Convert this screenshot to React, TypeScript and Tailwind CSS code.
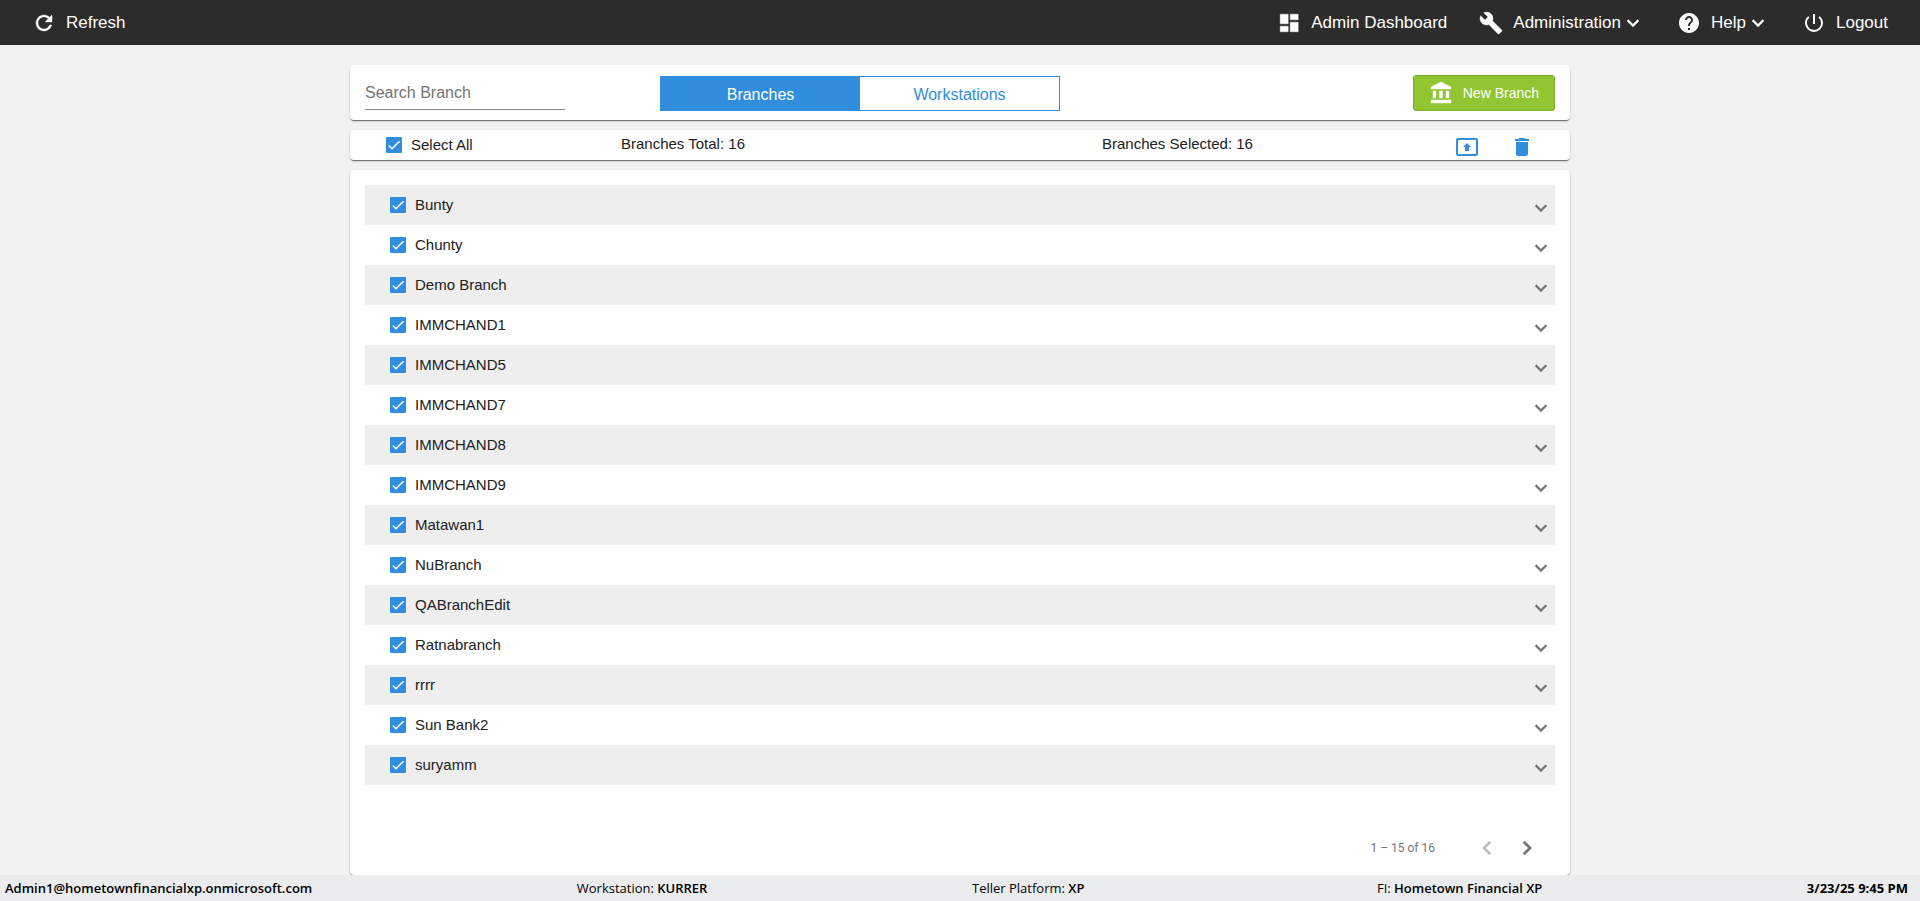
import { useState } from "react";
import { MdDelete, MdHelp, MdPowerSettingsNew, MdPresentToAll } from "react-icons/md";

const branches = [
  "Bunty",
  "Chunty",
  "Demo Branch",
  "IMMCHAND1",
  "IMMCHAND5",
  "IMMCHAND7",
  "IMMCHAND8",
  "IMMCHAND9",
  "Matawan1",
  "NuBranch",
  "QABranchEdit",
  "Ratnabranch",
  "rrrr",
  "Sun Bank2",
  "suryamm",
];

const card = "bg-white rounded shadow-[0_2px_1px_-1px_rgba(0,0,0,0.4),0_1px_1px_0_rgba(0,0,0,0.2),0_1px_3px_0_rgba(0,0,0,0.12)]";

interface CheckProps {
  label: string;
  checked: boolean;
  onChange: () => void;
}

function Check({ label, checked, onChange }: CheckProps) {
  return (
    <label className="flex items-center gap-[9px] text-[15px] leading-5 cursor-pointer">
      <span className="grid size-4">
        <input
          type="checkbox"
          checked={checked}
          onChange={onChange}
          className="col-start-1 row-start-1 size-4 appearance-none rounded-[1px] border-2 border-[#757575] checked:border-[#318ddd] checked:bg-[#318ddd]"
        />
        {checked && (
          <svg viewBox="0 0 24 24" className="col-start-1 row-start-1 size-4 pointer-events-none" fill="none" stroke="#fff" strokeWidth="2.2">
            <path d="M4.1 12.7 9 17.6 20.3 6.3" />
          </svg>
        )}
      </span>
      {label}
    </label>
  );
}

interface IconProps {
  d: string;
  className?: string;
}

// filled 24px glyph
function Icon({ d, className = "size-6" }: IconProps) {
  return (
    <svg viewBox="0 0 24 24" className={className} fill="currentColor" stroke="currentColor" strokeWidth="0.4">
      <path d={d} />
    </svg>
  );
}

const icons = {
  refresh: "M17.65 6.35C16.2 4.9 14.21 4 12 4c-4.42 0-7.99 3.58-7.99 8s3.57 8 7.99 8c3.73 0 6.84-2.55 7.73-6h-2.08c-.82 2.33-3.04 4-5.65 4-3.31 0-6-2.69-6-6s2.69-6 6-6c1.66 0 3.14.69 4.22 1.78L13 11h7V4l-2.35 2.35z",
  down: "M16.59 8.59L12 13.17 7.41 8.59 6 10l6 6 6-6z",
  left: "M15.41 7.41L14 6l-6 6 6 6 1.41-1.41L10.83 12z",
  right: "M10 6L8.59 7.41 13.17 12l-4.58 4.59L10 18l6-6z",
  wrench: "M22.7 19l-9.1-9.1c.9-2.3.4-5-1.5-6.9-2-2-5-2.4-7.4-1.3L9 6 6 9 1.6 4.7C.4 7.1.9 10.1 2.9 12.1c1.9 1.9 4.6 2.4 6.9 1.5l9.1 9.1c.4.4 1 .4 1.4 0l2.3-2.3c.5-.4.5-1.1.1-1.4z",
  dashboard: "M3.2 3.2h8v9.6h-8zM3.2 15.2h8v5.6h-8zM13.2 3.2h8v5.6h-8zM13.2 11.2h8v9.6h-8z",
  bank: "M4 10v7h3v-7H4zm6.5 0v7h3v-7h-3zM2 22h20v-3H2v3zm15-12v7h3v-7h-3zM12 1L2 6v2h20V6L12 1z",
};

export default function App() {
  const [selected, setSelected] = useState<string[]>(branches);
  const [search, setSearch] = useState("");
  const [tab, setTab] = useState("Branches");

  const toggle = (name: string) => {
    setSelected(selected.includes(name) ? selected.filter((n) => n !== name) : [...selected, name]);
  };

  const allSelected = selected.length === branches.length;
  const navItem = "flex items-center gap-2.5";

  return (
    <div className="flex flex-col min-h-screen bg-[#f2f2f2] text-[#212121] font-['Liberation_Sans',Arial,sans-serif]">
      <header className="flex justify-between items-center h-[45px] px-8 bg-[#2c2c2c] text-white text-[17px]">
        <button className={navItem}>
          <Icon d={icons.refresh} />
          Refresh
        </button>
        <nav className="flex items-center gap-8">
          <a href="#dashboard" className={navItem}>
            <Icon d={icons.dashboard} />
            Admin Dashboard
          </a>
          <button className="flex items-center">
            <span className={navItem}>
              <Icon d={icons.wrench} />
              Administration
            </span>
            <Icon d={icons.down} />
          </button>
          <button className="flex items-center">
            <span className={navItem}>
              <MdHelp className="size-6" />
              Help
            </span>
            <Icon d={icons.down} />
          </button>
          <button className={navItem}>
            <MdPowerSettingsNew className="size-6" />
            Logout
          </button>
        </nav>
      </header>

      <main className="flex flex-col grow gap-2.5 w-full max-w-[1220px] mx-auto pt-5">
        <section className={`${card} flex items-start h-[55px] px-[15px] pt-2.5`}>
          <input
            type="text"
            aria-label="Search Branch"
            placeholder="Search Branch"
            value={search}
            onChange={(e) => setSearch(e.target.value)}
            className="w-[200px] h-[35px] pt-0.5 text-base border-b border-[#8c8c8c] outline-none placeholder:text-[#757575]"
          />
          <div className="flex w-[400px] h-[35px] mt-px ml-[95px] text-base border border-[#318ddd]">
            {["Branches", "Workstations"].map((name) => (
              <button
                key={name}
                onClick={() => setTab(name)}
                className={`flex-1 pt-0.5 ${tab === name ? "bg-[#318ddd] text-white" : "text-[#318ddd]"}`}
              >
                {name}
              </button>
            ))}
          </div>
          <button className="flex items-center gap-2.5 h-9 ml-auto px-[15px] rounded-[3px] border border-[#7bab2b] bg-[#91c531] text-white text-sm">
            <Icon d={icons.bank} />
            New Branch
          </button>
        </section>

        <section className={`${card} flex items-center h-[30px] px-9 text-[15px]`}>
          <div className="w-[235px]">
            <Check label="Select All" checked={allSelected} onChange={() => setSelected(allSelected ? [] : branches)} />
          </div>
          <p className="w-[481px] pb-0.5 leading-5">Branches Total: 16</p>
          <p className="pb-0.5 leading-5">Branches Selected: {allSelected ? 16 : selected.length}</p>
          <div className="flex gap-[31px] ml-auto pt-1 text-[#318ddd]">
            <button aria-label="Export">
              <MdPresentToAll className="size-6" />
            </button>
            <button aria-label="Delete">
              <MdDelete className="size-6" />
            </button>
          </div>
        </section>

        <section className={`${card} flex flex-col grow justify-between px-[15px] pt-[15px] pb-[7px]`}>
          <ul>
            {branches.map((name) => (
              <li key={name} className="flex items-center justify-between h-10 pl-[25px] odd:bg-[#eee]">
                <Check label={name} checked={selected.includes(name)} onChange={() => toggle(name)} />
                <button aria-label={`Expand ${name}`} className="pt-1.5 pr-0.5 text-[#757575]">
                  <Icon d={icons.down} />
                </button>
              </li>
            ))}
          </ul>
          <div className="flex items-center justify-end pr-2 text-xs text-[#757575] font-['Roboto',sans-serif]">
            <span className="mr-8">1 – 15 of 16</span>
            <button aria-label="Previous page" disabled className="flex items-center justify-center size-10 text-[#bdbdbd]">
              <Icon d={icons.left} className="size-7" />
            </button>
            <button aria-label="Next page" className="flex items-center justify-center size-10">
              <Icon d={icons.right} className="size-7" />
            </button>
          </div>
        </section>
      </main>

      <footer className="flex justify-between items-center h-[26px] pt-0.5 pl-[5px] pr-3 bg-[#ebecee] text-black text-[13px] font-['Open_Sans',sans-serif]">
        <span className="font-semibold">Admin1@hometownfinancialxp.onmicrosoft.com</span>
        <span>Workstation: <span className="font-semibold">KURRER</span></span>
        <span className="mr-7">Teller Platform: <span className="font-semibold">XP</span></span>
        <span>FI: <span className="font-semibold">Hometown Financial XP</span></span>
        <span className="font-bold">3/23/25 9:45 PM</span>
      </footer>
    </div>
  );
}
